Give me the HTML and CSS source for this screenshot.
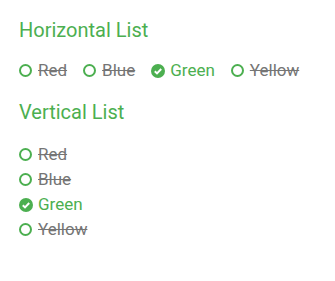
FILE: index.html
```html
<!DOCTYPE html>
<html lang="en">
<head>
  <meta charset="UTF-8" />
  <title>Checklist</title>
  <link rel="stylesheet" href="styles.css">
</head>
<body>

<div class="container">
  <h2>Horizontal List</h2>
  <ul class="list horizontal">
    <li class="done"><span class="icon"></span>Red</li>
    <li class="done"><span class="icon"></span>Blue</li>
    <li class="checked"><span class="icon"><svg viewBox="0 0 14 14" width="14" height="14"><circle cx="7" cy="7" r="7" fill="#4caf50"/><path d="M3.8 7.2l2.2 2.2 4.2-4.4" fill="none" stroke="#fff" stroke-width="2"/></svg></span>Green</li>
    <li class="done"><span class="icon"></span>Yellow</li>
  </ul>

  <h2>Vertical List</h2>
  <ul class="list vertical">
    <li class="done"><span class="icon"></span>Red</li>
    <li class="done"><span class="icon"></span>Blue</li>
    <li class="checked"><span class="icon"><svg viewBox="0 0 14 14" width="14" height="14"><circle cx="7" cy="7" r="7" fill="#4caf50"/><path d="M3.8 7.2l2.2 2.2 4.2-4.4" fill="none" stroke="#fff" stroke-width="2"/></svg></span>Green</li>
    <li class="done"><span class="icon"></span>Yellow</li>
  </ul>
</div>

</body>
</html>
```

FILE: styles.css
```css
body { font-family: Roboto, Arial, sans-serif; background: #fff; margin: 0; padding: 0; }
.container { padding: 18px 19px; }
h2 { color: #4caf50; font-size: 20px; font-weight: 400; margin: 0 0 16px; line-height: 24px; }
.list { list-style: none; margin: 0; padding: 0; font-size: 17px; line-height: 25px; }
.list.horizontal { display: flex; gap: 16px; margin-bottom: 17px; }
.list.vertical { display: flex; flex-direction: column; margin-top: 18px; }
.list li { display: flex; align-items: center; }
.icon { width: 14px; height: 14px; margin-right: 5px; display: inline-flex; }
.icon svg { display: block; }
.done .icon { box-sizing: border-box; border: 2px solid #4caf50; border-radius: 50%; width: 13px; height: 13px; margin: 0 6px 0 0; }
.done { color: #757575; text-decoration: line-through; }
.checked { color: #4caf50; }
```
